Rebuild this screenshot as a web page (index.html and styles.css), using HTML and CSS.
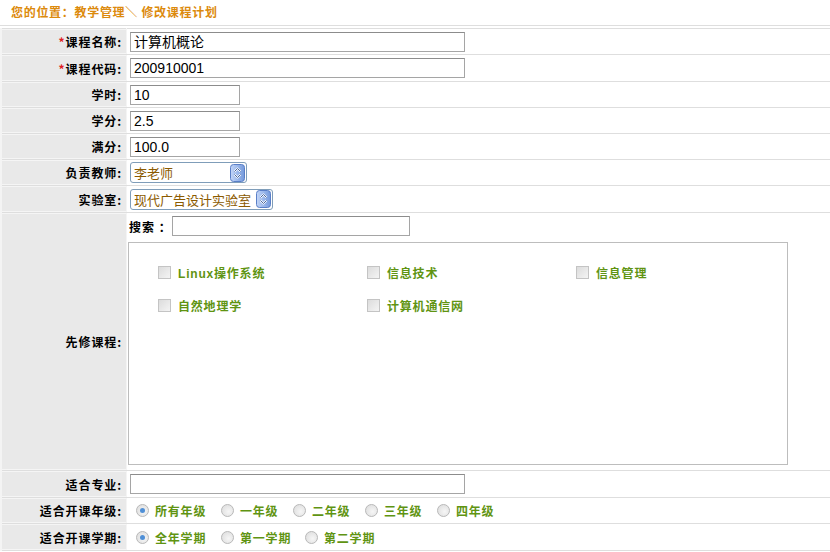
FILE: index.html
```html
<!DOCTYPE html>
<html lang="zh">
<head>
<meta charset="utf-8">
<title>修改课程计划</title>
<link rel="stylesheet" href="styles.css">
</head>
<body>
<div class="crumb">您的位置：教学管理＼ 修改课程计划</div>
<table class="form">
  <tr class="h25">
    <td class="lbl"><span class="req">*</span>课程名称:</td>
    <td class="val"><div class="inp w-long">计算机概论</div></td>
  </tr>
  <tr class="h26">
    <td class="lbl"><span class="req">*</span>课程代码:</td>
    <td class="val"><div class="inp w-long">200910001</div></td>
  </tr>
  <tr class="h25">
    <td class="lbl">学时:</td>
    <td class="val"><div class="inp w-short">10</div></td>
  </tr>
  <tr class="h25">
    <td class="lbl">学分:</td>
    <td class="val"><div class="inp w-short">2.5</div></td>
  </tr>
  <tr class="h25">
    <td class="lbl">满分:</td>
    <td class="val"><div class="inp w-short">100.0</div></td>
  </tr>
  <tr class="h25">
    <td class="lbl">负责教师:</td>
    <td class="val">
      <div class="sel w-t"><span class="sel-text">李老师</span>
        <svg class="sel-btn" viewBox="0 0 15 18" width="15" height="18"><defs><linearGradient id="g1" x1="0" y1="0" x2="1" y2="0"><stop offset="0" stop-color="#c3d6f8"/><stop offset="1" stop-color="#7399dc"/></linearGradient></defs><rect x="0.5" y="0.5" width="14" height="17" rx="3" fill="url(#g1)" stroke="#5a7fc7"/><path d="M4.5 7.5 L7.5 4.5 L10.5 7.5 M4.5 10.5 L7.5 13.5 L10.5 10.5" fill="none" stroke="#fff" stroke-width="1.8"/><path d="M4.5 7.5 L7.5 4.5 L10.5 7.5 M4.5 10.5 L7.5 13.5 L10.5 10.5" fill="none" stroke="#34558f" stroke-width="0.9"/></svg>
      </div>
    </td>
  </tr>
  <tr class="h26">
    <td class="lbl">实验室:</td>
    <td class="val">
      <div class="sel w-l"><span class="sel-text">现代广告设计实验室</span>
        <svg class="sel-btn" viewBox="0 0 15 18" width="15" height="18"><defs><linearGradient id="g2" x1="0" y1="0" x2="1" y2="0"><stop offset="0" stop-color="#c3d6f8"/><stop offset="1" stop-color="#7399dc"/></linearGradient></defs><rect x="0.5" y="0.5" width="14" height="17" rx="3" fill="url(#g2)" stroke="#5a7fc7"/><path d="M4.5 7.5 L7.5 4.5 L10.5 7.5 M4.5 10.5 L7.5 13.5 L10.5 10.5" fill="none" stroke="#fff" stroke-width="1.8"/><path d="M4.5 7.5 L7.5 4.5 L10.5 7.5 M4.5 10.5 L7.5 13.5 L10.5 10.5" fill="none" stroke="#34558f" stroke-width="0.9"/></svg>
      </div>
    </td>
  </tr>
  <tr class="big">
    <td class="lbl">先修课程:</td>
    <td class="val top">
      <div class="search"><span class="search-lbl">搜索 ：</span><div class="inp w-search"></div></div>
      <div class="box">
        <div class="grid">
          <div class="opt"><span class="cb"></span>Linux操作系统</div>
          <div class="opt"><span class="cb"></span>信息技术</div>
          <div class="opt"><span class="cb"></span>信息管理</div>
          <div class="opt"><span class="cb"></span>自然地理学</div>
          <div class="opt"><span class="cb"></span>计算机通信网</div>
        </div>
      </div>
    </td>
  </tr>
  <tr class="h26">
    <td class="lbl">适合专业:</td>
    <td class="val"><div class="inp w-long"></div></td>
  </tr>
  <tr class="h25">
    <td class="lbl">适合开课年级:</td>
    <td class="val">
      <div class="radios">
        <span class="r r1"><span class="rd on"></span>所有年级</span>
        <span class="r r2"><span class="rd"></span>一年级</span>
        <span class="r r2"><span class="rd"></span>二年级</span>
        <span class="r r2"><span class="rd"></span>三年级</span>
        <span class="r"><span class="rd"></span>四年级</span>
      </div>
    </td>
  </tr>
  <tr class="h26">
    <td class="lbl">适合开课学期:</td>
    <td class="val">
      <div class="radios">
        <span class="r r1"><span class="rd on"></span>全年学期</span>
        <span class="r r3"><span class="rd"></span>第一学期</span>
        <span class="r"><span class="rd"></span>第二学期</span>
      </div>
    </td>
  </tr>
</table>
</body>
</html>
```
FILE: styles.css
```css
html, body {
  margin: 0;
  padding: 0;
  background: #fff;
}
body {
  font-family: "Noto Sans CJK SC", "Liberation Sans", sans-serif;
  font-size: 12px;
  color: #000;
  width: 830px;
  height: 552px;
  overflow: hidden;
}
.crumb {
  height: 25px;
  line-height: 24px;
  padding-left: 11px;
  font-weight: bold;
  letter-spacing: 0.7px;
  color: #dc8a0c;
  border-bottom: 1px solid #dedede;
}
.form {
  width: 830px;
  margin-top: 2px;
  border-collapse: collapse;
  border-top: 1px solid #dedede;
}
.form td {
  padding: 0;
  border-bottom: 1px solid #dedede;
}
.h25 td { height: 25px; }
.h26 td { height: 26px; }
.big td { height: 257px; }
.form td.lbl {
  width: 120px;
  padding-right: 4px;
  text-align: right;
  font-weight: bold;
  letter-spacing: 0.9px;
  background: #e9e9e9;
  border-left: 2px solid #f4f4f4;
  border-right: 1px solid #f4f4f4;
  box-shadow: inset 0 1px 0 #f5f5f5, inset 0 -1px 0 #f5f5f5;
  white-space: nowrap;
}
.req {
  color: #e02020;
}
.form td.val {
  padding-left: 3px;
  border-left: 1px solid #dedede;
}
.form td.top {
  vertical-align: top;
}
.inp {
  box-sizing: border-box;
  height: 20px;
  border: 1px solid #a5a5a5;
  border-top-color: #8c8c8c;
  padding-left: 3px;
  line-height: 18px;
  font-family: "Liberation Sans", "Noto Sans CJK SC", sans-serif;
  font-size: 14px;
  background: #fff;
}
.w-long { width: 335px; }
.w-short { width: 110px; }
.w-search { width: 238px; }
.sel {
  box-sizing: border-box;
  display: flex;
  align-items: center;
  justify-content: space-between;
  height: 21px;
  border: 1px solid #7f9db9;
  border-radius: 3px;
  padding: 0 1px 0 3px;
  background: #fff;
  color: #8b5a00;
  font-size: 13px;
}
.w-t { width: 117px; }
.w-l { width: 143px; }
.sel-btn {
  display: block;
  flex: none;
}
.search {
  display: flex;
  align-items: center;
  margin-top: 3px;
}
.search-lbl {
  font-weight: bold;
  width: 43px;
  margin-left: -1px;
  letter-spacing: 1px;
  white-space: pre;
}
.box {
  box-sizing: border-box;
  margin-top: 6px;
  margin-left: -2px;
  width: 660px;
  height: 223px;
  border: 1px solid #bdbdbd;
  padding: 20px 0 0 29px;
}
.grid {
  display: grid;
  grid-template-columns: 209px 209px 200px;
  row-gap: 15px;
}
.opt {
  display: flex;
  align-items: center;
  height: 18px;
  color: #5f9412;
  font-weight: bold;
  letter-spacing: 0.8px;
  font-family: "Liberation Sans", "Noto Sans CJK SC", sans-serif;
}
.cb {
  box-sizing: border-box;
  width: 13px;
  height: 13px;
  border: 1px solid #c4c4c4;
  background: linear-gradient(135deg, #dcdcdc, #f4f4f4);
  margin-right: 7px;
}
.radios {
  display: flex;
  align-items: center;
  color: #5f9412;
  font-weight: bold;
  letter-spacing: 0.8px;
  padding-left: 6px;
}
.r {
  display: flex;
  align-items: center;
}
.r1 { width: 85px; }
.r2 { width: 72px; }
.r3 { width: 84px; }
.rd {
  box-sizing: border-box;
  width: 13px;
  height: 13px;
  border-radius: 50%;
  border: 1px solid #b9b9b9;
  background: radial-gradient(circle at 60% 60%, #f6f6f6, #dadada);
  margin-right: 6px;
  position: relative;
}
.rd.on::after {
  content: "";
  position: absolute;
  left: 3px;
  top: 3px;
  width: 5px;
  height: 5px;
  border-radius: 50%;
  background: #4f8fd6;
}
```
